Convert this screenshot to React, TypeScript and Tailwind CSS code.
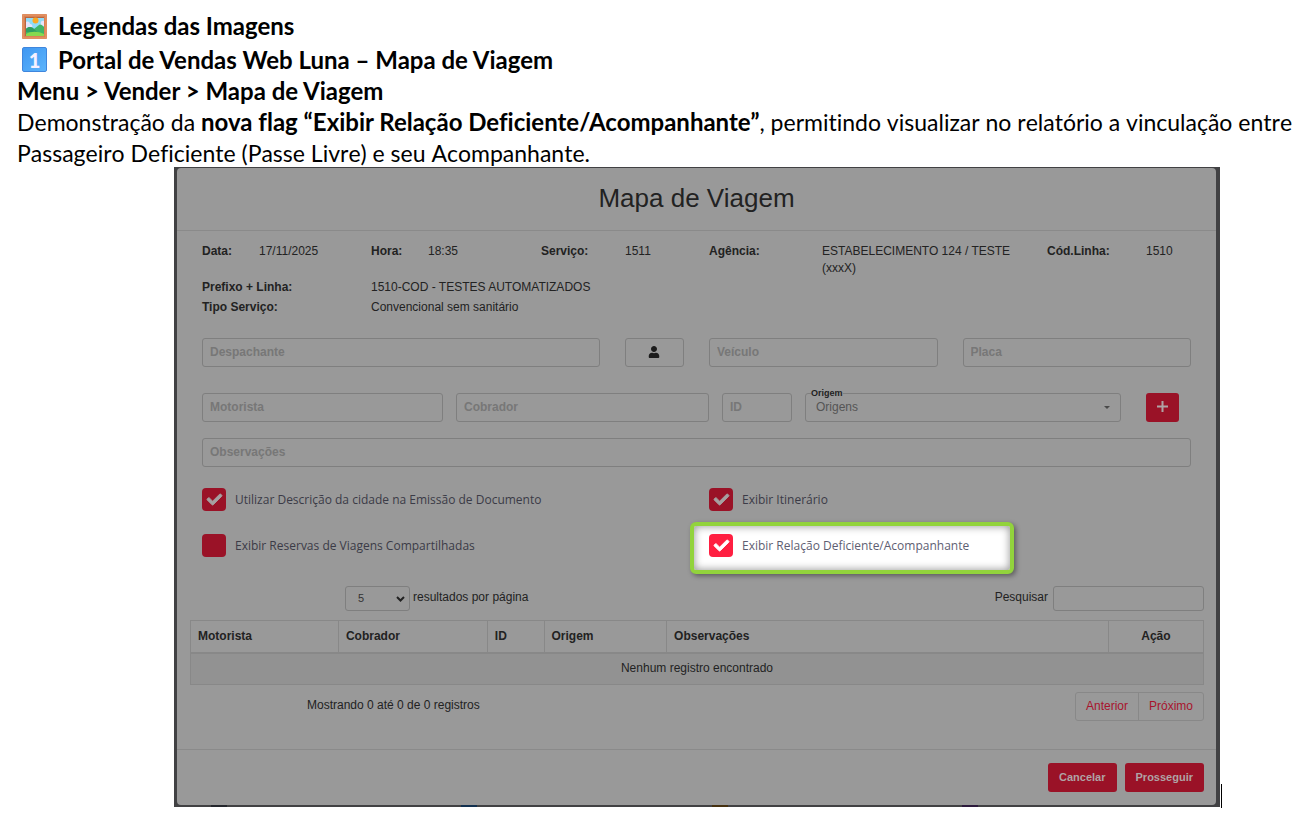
import React, { useState } from 'react';
import { FaCheck, FaUser } from 'react-icons/fa';

interface CheckOptionProps {
  id: string;
  label: string;
  defaultChecked?: boolean;
  highlighted?: boolean;
}

const fieldClass =
  'block h-[29px] w-full min-w-0 rounded-[3px] border border-[#7f7f7f] bg-transparent px-[7px] pb-0.5 text-xs text-[#222] outline-none placeholder:font-bold placeholder:text-[#777]';

const PictureEmoji = () => (
  <svg width="25" height="25" viewBox="0 0 25 25" className="shrink-0" aria-hidden="true">
    <rect width="25" height="25" rx="1" fill="#d98254" />
    <rect x="1" y="1" width="23" height="23" fill="none" stroke="#e89a6c" strokeWidth="1" />
    <rect x="3" y="3" width="19" height="19" fill="#b9653f" />
    <rect x="4" y="4" width="18" height="18" fill="#8fdcf8" />
    <path d="M4 8c2-1 4 0 4 2 2 0 3 2 2 4H4z" fill="#e6e4fb" />
    <path d="M22 7c-2-1-4 1-3 3-1 0-2 1-2 2h5z" fill="#e6e4fb" />
    <circle cx="13.500" cy="6.500" r="3" fill="#f9a825" />
    <path d="M4 15c3-3 6-2 8 0l5-4c2-1 3 0 5 2v9H4z" fill="#3fb568" />
    <path d="M4 15c3-3 6-2 8 0l3 3H4z" fill="#2e9e63" />
    <path d="M4 20c5-3 12-3 18 0v2H4z" fill="#86d94f" />
  </svg>
);

const KeycapOne = () => (
  <span className="flex h-[25px] w-[25px] shrink-0 items-center justify-center rounded-[2px] border border-[#3f86dd] bg-gradient-to-br from-[#3f97f2] to-[#5cb4fb] font-['Lato',sans-serif] text-xl font-black text-[#f6f0ff]">
    1
  </span>
);

const CheckOption: React.FC<CheckOptionProps> = ({ id, label, defaultChecked = false, highlighted = false }) => {
  const [checked, setChecked] = useState(defaultChecked);

  return (
    <div className="relative h-[23px]">
      {/* Spotlight around the new flag */}
      {highlighted && (
        <div className="absolute -top-[12px] -left-[19px] h-[52px] w-[324px] rounded-md border-4 border-[#92d33c] bg-white shadow-[2px_2px_5px_rgba(0,0,0,0.4),inset_0_0_8px_rgba(0,0,0,0.45)]" />
      )}
      <div className="relative flex h-full items-center gap-[9px]">
        <span className="relative flex h-[23px] w-6 shrink-0 items-center justify-center">
          <input
            id={id}
            type="checkbox"
            checked={checked}
            onChange={() => setChecked(!checked)}
            className={`absolute inset-0 h-[23px] w-6 appearance-none rounded ${highlighted ? 'bg-[#ff1f41]' : 'bg-[#9a1227]'}`}
          />
          {checked && (
            <FaCheck
              size={15}
              stroke="currentColor"
              strokeWidth={30}
              className={`pointer-events-none relative overflow-visible ${highlighted ? 'text-white' : 'text-[#a6a0a1]'}`}
            />
          )}
        </span>
        <label
          htmlFor={id}
          className={`font-['Open_Sans',sans-serif] text-xs whitespace-nowrap ${highlighted ? 'text-[#5e5e72]' : 'text-[#3b3b47]'}`}
        >
          {label}
        </label>
      </div>
    </div>
  );
};

const App: React.FC = () => {
  return (
    <div className="min-h-screen overflow-hidden bg-white text-black">
      <section className="pt-[9px] pr-1 pl-[17px] font-['Lato',sans-serif] text-2xl [font-variant-ligatures:none]">
        <h1 className="flex h-[34px] items-center gap-[11px] pl-[5px] font-bold">
          <PictureEmoji />
          Legendas das Imagens
        </h1>
        <h2 className="flex h-[33px] items-center gap-[11px] pl-[5px] font-bold">
          <KeycapOne />
          Portal de Vendas Web Luna – Mapa de Viagem
        </h2>
        <p className="leading-[30px] font-bold">Menu &gt; Vender &gt; Mapa de Viagem</p>
        <p className="text-[23px] leading-[31px] whitespace-nowrap [font-kerning:none]">
          Demonstração da{' '}
          <strong className="text-2xl leading-[31px] [font-kerning:normal]">nova flag “Exibir Relação Deficiente/Acompanhante”</strong>
          , permitindo visualizar no relatório a vinculação entre
          <br />
          Passageiro Deficiente (Passe Livre) e seu Acompanhante.
        </p>
      </section>

      <div className="-mt-0.5 mr-[92px] ml-[174px] flex items-end">
        {/* Dimmed page behind the dialog */}
        <div className="min-w-0 flex-1 bg-[#414143] pt-px pr-1 pl-[3px] font-['Liberation_Sans',Arial,sans-serif] text-xs text-[#222]">
          <div role="dialog" aria-labelledby="dialog-title" className="rounded bg-[#999]">
            <header className="flex h-[63px] items-center justify-center border-b border-[#8a8a8a] pb-0.5">
              <h3 id="dialog-title" className="text-[26px]">Mapa de Viagem</h3>
            </header>

            <div className="px-[25px] pt-3">
              <dl className="grid grid-cols-[57fr_112fr_57fr_113fr_84fr_84fr_113fr_225fr_99fr_45fr] leading-[17px]">
                <dt className="font-bold">Data:</dt>
                <dd>17/11/2025</dd>
                <dt className="font-bold">Hora:</dt>
                <dd>18:35</dd>
                <dt className="font-bold">Serviço:</dt>
                <dd>1511</dd>
                <dt className="font-bold">Agência:</dt>
                <dd className="pr-6">ESTABELECIMENTO 124 / TESTE (xxxX)</dd>
                <dt className="font-bold">Cód.Linha:</dt>
                <dd>1510</dd>
              </dl>
              <dl className="grid grid-cols-[169fr_820fr] leading-5">
                <dt className="font-bold">Prefixo + Linha:</dt>
                <dd>1510-COD - TESTES AUTOMATIZADOS</dd>
                <dt className="font-bold">Tipo Serviço:</dt>
                <dd>Convencional sem sanitário</dd>
              </dl>

              <div className="mt-[21px] grid grid-cols-12 gap-x-[25px]">
                <div className="col-span-5">
                  <input type="text" aria-label="Despachante" placeholder="Despachante" className={fieldClass} />
                </div>
                <button type="button" aria-label="Selecionar despachante" className="flex h-[29px] items-center justify-center rounded-[3px] border border-[#7f7f7f] pb-0.5 text-[#1c1c1c]">
                  <FaUser size={12} />
                </button>
                <div className="col-span-3">
                  <input type="text" aria-label="Veículo" placeholder="Veículo" className={fieldClass} />
                </div>
                <div className="col-span-3">
                  <input type="text" aria-label="Placa" placeholder="Placa" className={fieldClass} />
                </div>
              </div>

              <div className="mt-[26px] grid grid-cols-[241fr_253fr_70fr_316fr_57fr] gap-x-[13px]">
                <input type="text" aria-label="Motorista" placeholder="Motorista" className={fieldClass} />
                <input type="text" aria-label="Cobrador" placeholder="Cobrador" className={fieldClass} />
                <input type="text" aria-label="ID" placeholder="ID" className={fieldClass} />
                <div className="relative">
                  <label htmlFor="origem" className="absolute -top-[6px] left-[6px] bg-[#999] text-[9px] leading-3 font-bold">
                    Origem
                  </label>
                  <select id="origem" className="block h-[29px] w-full appearance-none rounded-[3px] border border-[#7f7f7f] px-[10px] pb-0.5 text-xs text-[#555]">
                    <option>Origens</option>
                  </select>
                  <svg width="6" height="3" viewBox="0 0 6 3" className="pointer-events-none absolute top-[13px] right-[11px]" aria-hidden="true">
                    <path d="M0 0h6L3 3z" fill="#4a4a4a" />
                  </svg>
                </div>
                <button type="button" aria-label="Adicionar" className="ml-3 flex h-[29px] w-[33px] items-center justify-center rounded-[3px] bg-[#9a1227] pb-0.5">
                  <svg width="11" height="11" viewBox="0 0 11 11" aria-hidden="true">
                    <path d="M5.500 0v11M0 5.500h11" stroke="#b0a3a5" strokeWidth="2" />
                  </svg>
                </button>
              </div>

              <div className="mt-4">
                <input type="text" aria-label="Observações" placeholder="Observações" className={fieldClass} />
              </div>

              <div className="mt-[21px] grid grid-cols-[507fr_482fr] gap-y-[23px]">
                <CheckOption id="descricao" label="Utilizar Descrição da cidade na Emissão de Documento" defaultChecked />
                <CheckOption id="itinerario" label="Exibir Itinerário" defaultChecked />
                <CheckOption id="reservas" label="Exibir Reservas de Viagens Compartilhadas" />
                <CheckOption id="relacao" label="Exibir Relação Deficiente/Acompanhante" defaultChecked highlighted />
              </div>
            </div>

            <div className="pt-[29px] pr-3 pl-[13px]">
              <div className="flex items-start justify-between pl-[155px]">
                <div className="flex gap-[3px]">
                  <div className="relative">
                    <select id="page-size" className="block h-[25px] w-[65px] appearance-none rounded-[3px] border border-[#7f7f7f] px-3 text-[11px] text-[#333]">
                      <option>5</option>
                    </select>
                    <svg width="9" height="6" viewBox="0 0 9 6" className="pointer-events-none absolute top-[10px] right-[5px]" aria-hidden="true">
                      <path d="M1 1l3.500 3.500L8 1" fill="none" stroke="#222" strokeWidth="2" />
                    </svg>
                  </div>
                  <label htmlFor="page-size" className="leading-[23px]">resultados por página</label>
                </div>
                <div className="flex gap-[5px]">
                  <label htmlFor="pesquisar" className="leading-[23px]">Pesquisar</label>
                  <input id="pesquisar" type="search" className="block h-[25px] w-[151px] rounded-[3px] border border-[#7f7f7f] px-2 outline-none" />
                </div>
              </div>

              <table className="mt-[9px] w-full table-fixed border-collapse border border-[#888]">
                <colgroup>
                  <col className="w-[14.6%]" />
                  <col className="w-[14.7%]" />
                  <col className="w-[5.6%]" />
                  <col className="w-[12.1%]" />
                  <col />
                  <col className="w-[9.4%]" />
                </colgroup>
                <thead>
                  <tr className="h-8 border-b-2 border-[#888] text-left">
                    <th className="border-r border-[#888] px-[7px]">Motorista</th>
                    <th className="border-r border-[#888] px-[7px]">Cobrador</th>
                    <th className="border-r border-[#888] px-[7px]">ID</th>
                    <th className="border-r border-[#888] px-[7px]">Origem</th>
                    <th className="border-r border-[#888] px-[7px]">Observações</th>
                    <th className="text-center">Ação</th>
                  </tr>
                </thead>
                <tbody>
                  <tr className="h-8 bg-[#929292]">
                    <td colSpan={6} className="pb-0.5 text-center">Nenhum registro encontrado</td>
                  </tr>
                </tbody>
              </table>

              <div className="mt-[7px] flex items-start justify-between pl-[117px]">
                <p className="leading-[27px]">Mostrando 0 até 0 de 0 registros</p>
                <nav className="flex h-[29px] rounded-[3px] border border-[#888] text-[#a8142d]">
                  <a href="#anterior" className="border-r border-[#888] px-[10px] leading-[27px]">Anterior</a>
                  <a href="#proximo" className="px-[10px] leading-[27px]">Próximo</a>
                </nav>
              </div>
            </div>

            <footer className="mt-7 flex h-[56px] items-center justify-end gap-2 border-t border-[#8a8a8a] px-3 text-[11px] font-bold text-[#b0a3a5]">
              <button type="button" className="h-[29px] rounded-[3px] bg-[#9a1227] px-[11px]">Cancelar</button>
              <button type="button" className="h-[29px] rounded-[3px] bg-[#9a1227] px-[11px]">Prosseguir</button>
            </footer>
          </div>

          {/* Tops of the page icons that peek out below the dialog */}
          <div className="grid h-0.5 grid-cols-4 pr-1 pl-[34px]">
            <span className="w-4 bg-[#24262c]" />
            <span className="w-4 bg-[#12304f]" />
            <span className="w-4 bg-[#45300f]" />
            <span className="w-4 bg-[#2c1a3c]" />
          </div>
        </div>
        <span className="-mb-px ml-px h-6 w-px bg-black" />
      </div>
    </div>
  );
};

export default App;
